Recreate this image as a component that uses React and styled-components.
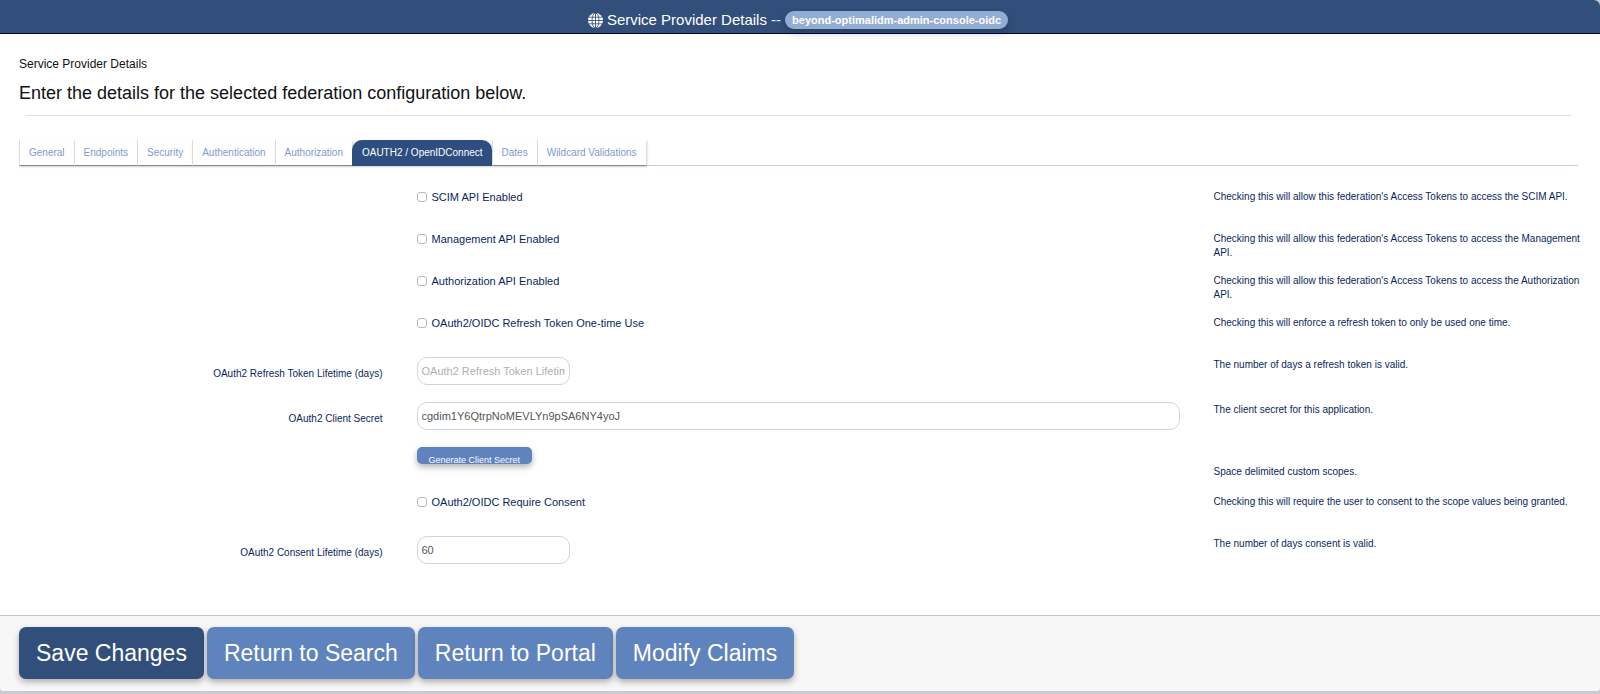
import { useId, useState } from "react";
import styled, { createGlobalStyle } from "styled-components";

const TABS = [
  "General",
  "Endpoints",
  "Security",
  "Authentication",
  "Authorization",
  "OAUTH2 / OpenIDConnect",
  "Dates",
  "Wildcard Validations",
];

const CheckRow = ({ label, help }) => (
  <Row>
    <FieldCell>
      <CheckLabel>
        <CheckInput type="checkbox" />
        {label}
      </CheckLabel>
    </FieldCell>
    <HelpCell>{help}</HelpCell>
  </Row>
);

const TextRow = ({ label, help, wide, ...inputProps }) => {
  const id = useId();

  return (
    <Row $space={16}>
      <LabelCell htmlFor={id}>{label}</LabelCell>
      <FieldCell>
        <TextInput id={id} type="text" $wide={wide} {...inputProps} />
      </FieldCell>
      <HelpCell>{help}</HelpCell>
    </Row>
  );
};

const Globe = () => (
  <svg width="15" height="15" viewBox="0 0 16 16" aria-hidden="true">
    <circle cx="8" cy="8" r="8" fill="#fff" />
    <g fill="none" stroke="#314f7a" strokeWidth="0.9">
      <ellipse cx="8" cy="8" rx="3.7" ry="8" />
      <path d="M8 0v16M0 8h16M1 4.5h14M1 11.5h14" />
    </g>
  </svg>
);

const App = () => {
  const [activeTab, setActiveTab] = useState("OAUTH2 / OpenIDConnect");

  return (
    <Page>
      <GlobalStyle />
      <TopBar>
        <Globe />
        <span>Service Provider Details --</span>
        <Badge>beyond-optimalidm-admin-console-oidc</Badge>
      </TopBar>
      <Main>
        <Intro>
          <h1>Service Provider Details</h1>
          <p>Enter the details for the selected federation configuration below.</p>
        </Intro>
        <Divider />
        <TabBar role="tablist">
          {TABS.map((tab) => (
            <Tab
              key={tab}
              type="button"
              role="tab"
              aria-selected={tab === activeTab}
              $active={tab === activeTab}
              onClick={() => setActiveTab(tab)}
            >
              {tab}
            </Tab>
          ))}
        </TabBar>
        <Form onSubmit={(e) => e.preventDefault()}>
          <CheckRow
            label="SCIM API Enabled"
            help="Checking this will allow this federation's Access Tokens to access the SCIM API."
          />
          <CheckRow
            label="Management API Enabled"
            help="Checking this will allow this federation's Access Tokens to access the Management API."
          />
          <CheckRow
            label="Authorization API Enabled"
            help="Checking this will allow this federation's Access Tokens to access the Authorization API."
          />
          <CheckRow
            label="OAuth2/OIDC Refresh Token One-time Use"
            help="Checking this will enforce a refresh token to only be used one time."
          />
          <TextRow
            label="OAuth2 Refresh Token Lifetime (days)"
            placeholder="OAuth2 Refresh Token Lifetime (days)"
            help="The number of days a refresh token is valid."
          />
          <TextRow
            label="OAuth2 Client Secret"
            defaultValue="cgdim1Y6QtrpNoMEVLYn9pSA6NY4yoJ"
            help="The client secret for this application."
            wide
          />
          <Row $height={17} $space={0}>
            <FieldCell>
              <GenerateButton type="button">Generate Client Secret</GenerateButton>
            </FieldCell>
          </Row>
          <Row $height={15} $space={15}>
            <HelpCell>Space delimited custom scopes.</HelpCell>
          </Row>
          <CheckRow
            label="OAuth2/OIDC Require Consent"
            help="Checking this will require the user to consent to the scope values being granted."
          />
          <TextRow
            label="OAuth2 Consent Lifetime (days)"
            defaultValue="60"
            help="The number of days consent is valid."
          />
        </Form>
      </Main>
      <Footer>
        <FooterButton type="button" $primary>
          Save Changes
        </FooterButton>
        <FooterButton type="button">Return to Search</FooterButton>
        <FooterButton type="button">Return to Portal</FooterButton>
        <FooterButton type="button">Modify Claims</FooterButton>
      </Footer>
    </Page>
  );
};

export default App;

const GlobalStyle = createGlobalStyle`
  * {
    box-sizing: border-box;
  }

  body {
    margin: 0;
    background-color: #c9c9ce;
    font-family: "Liberation Sans", Arial, sans-serif;
    color: #0a1f5c;
  }

  button,
  input {
    font-family: inherit;
  }
`;

const Page = styled.div`
  min-height: calc(100vh - 3px);
  margin-bottom: 3px;
  display: flex;
  flex-direction: column;
  background-color: white;
  border-radius: 0 6px 4px 4px;
`;

const TopBar = styled.header`
  height: 34px;
  display: flex;
  justify-content: center;
  align-items: center;
  gap: 4px;
  padding-top: 7px;
  padding-right: 4px;
  background-color: #314f7a;
  border-bottom: 1px solid #00004a;
  border-radius: 0 6px 0 0;
  font-size: 15px;
  line-height: 18px;
  color: white;
`;

const Badge = styled.span`
  padding: 0 7px;
  border-radius: 9px;
  background-color: #93acd4;
  box-shadow: 0 4px 8px rgba(0, 0, 0, 0.2);
  font-size: 11px;
  font-weight: 700;
  line-height: 18px;
`;

const Main = styled.main`
  flex: 1;
  padding-bottom: 34px;
`;

const Intro = styled.div`
  padding: 21px 19px 0;
  color: #111;

  h1 {
    margin: 0;
    font-size: 12px;
    font-weight: 400;
    line-height: 18px;
  }

  p {
    margin: 7px 0 0;
    font-size: 18px;
    line-height: 26px;
  }
`;

const Divider = styled.hr`
  margin: 9px 29px 0 26px;
  border: 0;
  border-top: 1px solid #dedede;
`;

const TabBar = styled.div`
  display: flex;
  margin: 24px 22px 0 19px;
  border-bottom: 1px solid #c3d0e8;
`;

const Tab = styled.button`
  height: 26px;
  margin-bottom: -1px;
  padding: 0 9px;
  border: 0;
  border-left: 1px solid ${(props) => (props.$active ? "#314f7a" : "#dcdcdc")};
  border-bottom: 1px solid ${(props) => (props.$active ? "#314f7a" : "#85888f")};
  border-radius: ${(props) => (props.$active ? "10px 10px 0 0" : "0")};
  background-color: ${(props) => (props.$active ? "#2d4e7e" : "white")};
  box-shadow: 1px 1px 2px rgba(0, 0, 0, 0.2);
  font-size: 10px;
  line-height: 14px;
  color: ${(props) => (props.$active ? "white" : "#7c9bce")};
  cursor: pointer;
`;

const Form = styled.form`
  padding: 23px 5px 0 1px;
`;

const Row = styled.div`
  min-height: ${(props) => props.$height ?? 29}px;
  margin-bottom: ${(props) => props.$space ?? 13}px;
  display: grid;
  grid-template-columns: 1fr 2fr 1fr;
`;

const LabelCell = styled.label`
  grid-column: 1;
  padding: 10px 17px 0;
  font-size: 10px;
  line-height: 14px;
  text-align: right;
`;

const FieldCell = styled.div`
  grid-column: 2;
  grid-row: 1;
  padding: 0 17px;
`;

const HelpCell = styled.div`
  grid-column: 3;
  padding: 1px 8px 0 17px;
  font-size: 10px;
  line-height: 14px;
`;

const CheckLabel = styled.label`
  display: flex;
  align-items: center;
  gap: 5px;
  width: fit-content;
  padding-top: 1px;
  font-size: 11px;
  line-height: 14px;
`;

const CheckInput = styled.input`
  appearance: none;
  width: 10px;
  height: 10px;
  margin: 0;
  border: 1px solid #b9b9bd;
  border-radius: 3px;
  background-color: white;

  &:checked {
    background-color: #5f83bd;
  }
`;

const TextInput = styled.input`
  display: block;
  width: ${(props) => (props.$wide ? "100%" : "153px")};
  height: 28px;
  padding: 0 4px;
  border: 1px solid #cfd5dc;
  border-radius: 10px;
  background-color: white;
  font-size: 11px;
  color: #555;

  &::placeholder {
    color: #b0b0b0;
  }
`;

const GenerateButton = styled.button`
  display: block;
  height: 17px;
  padding: 6px 12px 0;
  border: 0;
  border-radius: 5px;
  background-color: #5f83bd;
  box-shadow: 0 3px 6px rgba(0, 0, 0, 0.3);
  overflow: hidden;
  font-size: 9px;
  line-height: 14px;
  color: white;
  cursor: pointer;
`;

const Footer = styled.footer`
  display: flex;
  gap: 3px;
  padding: 11px 19px 12px;
  border-top: 1px solid #c4c4c4;
  border-radius: 0 0 4px 4px;
  background-color: #f7f7f7;
`;

const FooterButton = styled.button`
  height: 52px;
  padding: 0 17px;
  border: 0;
  border-radius: 7px;
  background-color: ${(props) => (props.$primary ? "#314f7a" : "#5f83bd")};
  box-shadow: 0 3px 6px rgba(0, 0, 0, 0.3);
  font-size: 23px;
  color: white;
  cursor: pointer;
`;
